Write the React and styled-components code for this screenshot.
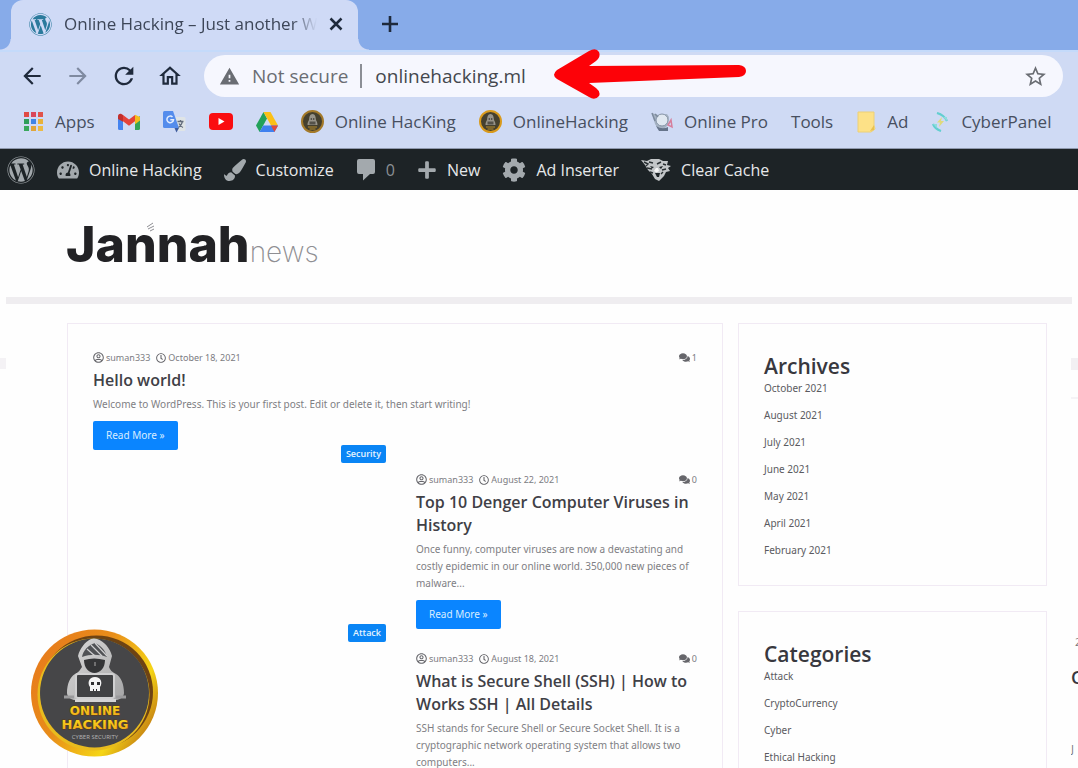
import React from 'react';
import styled, { createGlobalStyle, css } from 'styled-components';
import {
  FaWordpress,
  FaTachometerAlt,
  FaPaintBrush,
  FaPlus,
  FaCog,
  FaComments,
  FaRegUserCircle,
  FaRegClock,
} from 'react-icons/fa';
import { MdArrowBack, MdArrowForward, MdRefresh, MdOutlineHome, MdWarning, MdStarBorder } from 'react-icons/md';

const GlobalStyle = createGlobalStyle`
  * {
    box-sizing: border-box;
  }

  body {
    margin: 0;
    overflow: hidden;
    background: #fefefe;
    font-family: 'Open Sans', 'Noto Sans', sans-serif;
  }

  a {
    color: inherit;
    text-decoration: none;
  }

  button {
    display: inline-flex;
    align-items: center;
    justify-content: center;
    padding: 0;
    border: 0;
    background: none;
    color: inherit;
    font: inherit;
  }

  svg {
    display: block;
    flex-shrink: 0;
  }
`;

const Shell = styled.div`
  position: relative;
  display: flex;
  flex-direction: column;
  height: 100vh;
  overflow: hidden;

  > * {
    flex-shrink: 0;
  }
`;

/* ---------- browser ---------- */

const TabStrip = styled.div`
  display: flex;
  align-items: stretch;
  height: 50px;
  padding-left: 11px;
  background: #87abe9;
  color: #1f2a3c;
`;

const Tab = styled.div`
  position: relative;
  display: flex;
  align-items: center;
  gap: 12px;
  width: 347px;
  padding: 0 15px 2px 18px;
  border-radius: 12px 12px 0 0;
  background: #cfdaf6;

  &:before,
  &:after {
    content: '';
    position: absolute;
    bottom: 0;
    width: 11px;
    height: 11px;
  }

  &:before {
    right: 100%;
    background: radial-gradient(circle at 0 0, #87abe9 10px, #cfdaf6 11px);
  }

  &:after {
    left: 100%;
    background: radial-gradient(circle at 100% 0, #87abe9 10px, #cfdaf6 11px);
  }
`;

const TabTitle = styled.span`
  flex: 1;
  overflow: hidden;
  color: #3d4658;
  font-size: 17px;
  line-height: 24px;
  white-space: nowrap;
  mask-image: linear-gradient(to right, #000 90%, transparent 100%);
`;

const NewTab = styled.button`
  width: 40px;
  margin: 0 0 2px 12px;
`;

const Toolbar = styled.div`
  display: flex;
  align-items: center;
  gap: 22px;
  padding: 3px 15px 0 20px;
  border-top: 2px solid #c4dafa;
  background: #cfdaf4;
  color: #1f2a3c;
`;

const NavButton = styled.button`
  width: 24px;
  height: 24px;
  opacity: ${({ $muted }) => ($muted ? 0.45 : 1)};
`;

const Omnibox = styled.form`
  position: relative;
  display: flex;
  flex: 1;
  align-items: center;
  height: 42px;
  padding: 0 15px;
  border-radius: 21px;
  background: #f6f7fe;
  font-size: 19px;
  color: #6a6d73;
`;

const Security = styled.button`
  gap: 12px;
  padding-right: 12px;
`;

const Address = styled.input`
  flex: 1;
  min-width: 0;
  height: 24px;
  padding: 0 0 0 13px;
  border: 0;
  border-left: 2px solid #8b8e95;
  outline: 0;
  background: none;
  color: #44474d;
  font: inherit;
`;

const Pointer = styled.svg`
  position: absolute;
  top: -7px;
  left: 349px;
`;

const Bookmarks = styled.nav`
  display: flex;
  align-items: center;
  gap: 23px;
  height: 52px;
  padding: 0 18px 2px 23px;
  overflow: hidden;
  border-bottom: 1px solid #8f99ae;
  background: #cfdaf4;
  color: #474f60;
  font-size: 17px;
  line-height: 24px;
`;

const Bookmark = styled.a`
  display: flex;
  align-items: center;
  gap: 11px;
  white-space: nowrap;
`;

/* ---------- admin bar ---------- */

const AdminBar = styled.nav`
  display: flex;
  align-items: center;
  gap: 22px;
  height: 41px;
  padding: 0 7px;
  background: #1d2326;
  color: #e6e8ea;
  font-size: 16px;
`;

const AdminItem = styled.a`
  display: flex;
  align-items: center;
  gap: 10px;
  white-space: nowrap;
  ${({ $dim }) =>
    $dim &&
    css`
      color: #8b9094;
    `}

  svg {
    color: #a3a9ad;
  }
`;

/* ---------- site ---------- */

const SiteHeader = styled.header`
  height: 107px;
  padding: 23px 66px 0;
`;

const Brand = styled.a`
  position: relative;
  display: inline-flex;
  align-items: baseline;
  color: #222225;
  font-family: Inter, sans-serif;
  font-size: 50px;
  font-weight: 800;
  line-height: 62px;
`;

const BrandThin = styled.span`
  color: #8f8f93;
  font-size: 28px;
  font-weight: 200;
`;

const BrandMark = styled.svg`
  position: absolute;
  top: 9px;
  left: 80px;
`;

const HeaderShade = styled.div`
  height: 7px;
  margin: 0 6px;
  background: #efedf0;
`;

const Columns = styled.div`
  display: grid;
  grid-template-columns: minmax(0, 656fr) minmax(0, 318fr) 7px;
  gap: 15px;
  align-items: start;
  padding: 19px 0 0 67px;
`;

const panel = css`
  border: 1px solid #f1eaf4;
  background: #fefefe;
`;

const Posts = styled.main`
  ${panel};
  display: flex;
  flex-direction: column;
  gap: 21px;
  padding: 25px;
`;

const Post = styled.article`
  display: grid;
  grid-template-columns: ${({ $thumb }) => ($thumb ? '293px minmax(0, 1fr)' : 'minmax(0, 1fr)')};
  column-gap: 30px;
`;

const Thumb = styled.div`
  position: relative;
`;

const Badge = styled.a`
  position: absolute;
  top: -26px;
  right: 0;
  padding: 0 5px;
  border-radius: 2px;
  background: #0a85f5;
  color: #e6f4ff;
  font-size: 9px;
  font-weight: 600;
  line-height: 18px;
`;

const Meta = styled.div`
  display: flex;
  align-items: center;
  gap: 6px;
  margin-bottom: 3px;
  color: #7c7c82;
  font-family: 'Noto Sans', sans-serif;
  font-size: 9px;
  line-height: 17px;
`;

const MetaItem = styled.span`
  display: flex;
  align-items: center;
  gap: 2px;

  svg {
    color: #66666b;
  }

  &:last-child {
    margin-left: auto;
  }
`;

const PostTitle = styled.h2`
  margin: 0 0 4px;
  color: #404046;
  font-size: 16px;
  font-weight: 600;
  line-height: 23px;
`;

const Excerpt = styled.p`
  margin: 0 0 8px;
  color: #7e7e84;
  font-family: 'Noto Sans', sans-serif;
  font-size: 10px;
  line-height: 17px;
`;

const ReadMore = styled.a`
  display: inline-block;
  padding: 0 13px;
  border-radius: 2px;
  background: #0a85ff;
  color: #d8edff;
  font-family: 'Noto Sans', sans-serif;
  font-size: 10px;
  line-height: 29px;
`;

const Sidebar = styled.aside`
  display: flex;
  flex-direction: column;
  gap: 25px;
  margin-right: 9px;
`;

const Widget = styled.section`
  ${panel};
  padding: 29px 25px 26px;
`;

const WidgetTitle = styled.h3`
  margin: 0;
  color: #38383e;
  font-size: 21px;
  font-weight: 600;
  line-height: 27px;
`;

const WidgetList = styled.ul`
  display: flex;
  flex-direction: column;
  gap: 10px;
  margin: 0;
  padding: 0;
  color: #5a5a60;
  font-family: 'Noto Sans', sans-serif;
  font-size: 10px;
  line-height: 17px;
  list-style: none;
`;

const NextColumn = styled.div`
  overflow: hidden;
  color: #38383e;
`;

const NextShade = styled.div`
  height: 12px;
  margin-top: 35px;
  background: #f2f0f3;
`;

const NextBody = styled.div`
  margin-top: 27px;
  padding-top: 234px;
  border-top: 2px solid #f5f3f6;
`;

const NextText = styled.div`
  padding-left: ${({ $indent }) => ($indent ? 4 : 0)}px;
  color: #77777c;
  font-size: 11px;
  line-height: 17px;
`;

const NextTitle = styled.div`
  margin: 14px 0 50px;
  font-size: 18px;
  font-weight: 600;
  line-height: 26px;
`;

const EdgeShade = styled.div`
  position: absolute;
  top: 358px;
  left: 0;
  width: 6px;
  height: 11px;
  background: #f4f2f5;
`;

const Seal = styled.svg`
  position: absolute;
  bottom: 10px;
  left: 30px;
`;

/* ---------- drawings ---------- */

const CloseIcon = () => (
  <svg width="14" height="14" viewBox="0 0 14 14" fill="none" stroke="currentColor" strokeWidth="2.500">
    <path d="M1.500 1.500l11 11M12.500 1.500l-11 11" />
  </svg>
);

const PlusIcon = () => (
  <svg width="18" height="18" viewBox="0 0 18 18" fill="none" stroke="currentColor" strokeWidth="2.600">
    <path d="M9 1v16M1 9h16" />
  </svg>
);

const AppsIcon = () => {
  const colors = ['#e04a44', '#d9475a', '#e0534a', '#2f9e5b', '#3f84e5', '#e8b23a', '#3aa85c', '#e0a53a', '#ecbb45'];
  return (
    <svg width="21" height="21" viewBox="0 0 21 21">
      {colors.map((c, i) => (
        <rect key={i} x={1 + (i % 3) * 7} y={1 + Math.floor(i / 3) * 7} width="5" height="5" fill={c} />
      ))}
    </svg>
  );
};

const GmailIcon = () => (
  <svg width="22" height="18" viewBox="0 0 22 18">
    <path d="M0 3v12.500q0 1.500 1.500 1.500H5V7z" fill="#4483ef" />
    <path d="M22 3v12.500q0 1.500-1.500 1.500H17V7z" fill="#35a456" />
    <path d="M17 1.800L22 4v3.500l-5 3.700z" fill="#f4bc1c" />
    <path d="M5 2l6 4.600L17 2v6.200l-6 4.600-6-4.600z" fill="#e5433a" />
    <path d="M0 3.500Q0 .5 3 .8L5 2v6.800L0 6z" fill="#c32f2c" />
  </svg>
);

const TranslateIcon = () => (
  <svg width="23" height="22" viewBox="0 0 23 22">
    <path d="M10 6h11q1.500 0 1.500 1.500v11q0 1.500-1.500 1.500h-7z" fill="#dfe4e6" />
    <path d="M11.500 17H16l-2.500 4.500z" fill="#3f5c9e" />
    <path d="M1.500 0H10l6 17H1.500Q0 17 0 15.500v-14Q0 0 1.500 0z" fill="#548cec" />
    <path d="M9.500 6A3.300 3.300 0 1 0 10.500 8.800H7.300" fill="none" stroke="#e3edff" strokeWidth="1.500" />
    <path d="M14.500 10.500h6M17.500 9v1.500M19.500 10.500q-1 4-4 6M16 12.500q1.500 3 4 4" fill="none" stroke="#646d7c" strokeWidth="1.300" />
  </svg>
);

const YoutubeIcon = () => (
  <svg width="24" height="17" viewBox="0 0 24 17">
    <rect width="24" height="17" rx="4" fill="#fa0d10" />
    <path d="M9.500 5v7l6-3.500z" fill="#fff" />
  </svg>
);

const DriveIcon = () => (
  <svg width="22" height="20" viewBox="0 0 22 20">
    <path d="M7.500 0L0 13.500 3.600 20 11 6.500z" fill="#22a15a" />
    <path d="M7.500 0h7L22 13.500h-7z" fill="#fbc016" />
    <path d="M3.600 20l3.600-6.500H22L18.400 20z" fill="#3f80ef" />
    <path d="M15 13.500h7L18.400 20z" fill="#e2493b" />
  </svg>
);

const HackerIcon = ({ bright }) => (
  <svg width="23" height="23" viewBox="0 0 23 23">
    <circle cx="11.500" cy="11.500" r="10.500" fill="#45402f" stroke={bright ? '#d99a1c' : '#a47a2a'} strokeWidth="2" />
    <path d="M11.500 4c2.500 0 3.300 3 3.300 5 0 1.500 1.700 2.500 1.700 6h-10c0-3.500 1.700-4.500 1.700-6 0-2 .8-5 3.300-5z" fill="#98948a" />
    <circle cx="10.300" cy="9" r="0.800" fill="#2c2a24" />
    <circle cx="12.700" cy="9" r="0.800" fill="#2c2a24" />
    <rect x="8.500" y="11.500" width="6" height="3" fill="#55524a" />
    <path d="M7 17h9M8.500 19h6" stroke="#b88c2c" strokeWidth="1.200" />
  </svg>
);

const GlobeIcon = () => (
  <svg width="22" height="20" viewBox="0 0 22 20">
    <path d="M1 1l6 2 9-1 2 3-1 8-4 4H7l-3-5z" fill="#a5b2c2" />
    <circle cx="11" cy="8" r="6" fill="#e0e8f1" stroke="#8694a7" />
    <path d="M1 1l3 8M4 2l3 3" stroke="#7d8b9e" strokeWidth="1.500" />
    <path d="M5 14q6 4 12 1v4H8z" fill="#66748a" />
    <path d="M17 13l3-5 1 7z" fill="none" stroke="#d67f9c" strokeWidth="1.500" />
  </svg>
);

const NoteIcon = () => (
  <svg width="20" height="22" viewBox="0 0 20 22">
    <path d="M2 1h16v13l1 4-4 3H2z" fill="#fde187" stroke="#edd077" />
    <path d="M14 20l4-6v5z" fill="#e8c24f" />
  </svg>
);

const CyberPanelIcon = () => (
  <svg width="19" height="20" viewBox="0 0 19 20">
    <path d="M6 1q7 2 10 8M2 12q2 5 8 7" fill="none" stroke="#62cfd0" strokeWidth="2.200" />
    <path d="M12 5h4V9zM2 12h4v4z" fill="#8fdcdc" />
    <path d="M11 5l-5 5.500h3L8 15l5-6h-3z" fill="#dfda7c" />
  </svg>
);

const SpeechIcon = () => (
  <svg width="20" height="23" viewBox="0 0 20 23" fill="currentColor">
    <path d="M3 1h14q2 0 2 2v11q0 2-2 2h-3l-7 6.500V16H3q-2 0-2-2V3q0-2 2-2z" />
  </svg>
);

const TigerIcon = () => (
  <svg width="30" height="24" viewBox="0 0 30 24">
    <path d="M0 2l6 1 4-2h8l4 2h5l-1 4 4 1-3 2 2 3-4 1-2 4-5 5-4-2-3-5-4-4-3-5z" fill="#c3c6c8" />
    <path
      d="M3 4l4 2-2 2M8 4l4 1M20 4l-4 2M6 10l5 1M22 6l3 1M25 11l-4 1M9 14l3 1M20 16l2-2"
      fill="none"
      stroke="#2a3033"
      strokeWidth="1.400"
    />
    <path d="M9 8l4 1-2 1.500zM18 9l4-1-2 3zM14 15h5l-1 4h-2z" fill="#1d2326" />
    <path d="M13 13l2-3h2l1 3-2.500 1.500z" fill="#f5f5f5" />
  </svg>
);

const HackerSeal = () => (
  <Seal width="129" height="129" viewBox="0 0 129 129" role="img" aria-label="Online Hacking">
    <defs>
      <linearGradient id="ring" x1="0" y1="0.2" x2="1" y2="0.8">
        <stop offset="0" stopColor="#e77a1c" />
        <stop offset="0.4" stopColor="#e88d1a" />
        <stop offset="0.75" stopColor="#f5d516" />
        <stop offset="1" stopColor="#b96c12" />
      </linearGradient>
      <linearGradient id="gold" x1="0" y1="0" x2="0" y2="1">
        <stop offset="0" stopColor="#fbe21c" />
        <stop offset="1" stopColor="#eda21a" />
      </linearGradient>
      <linearGradient id="steel" x1="0" y1="0" x2="1" y2="1">
        <stop offset="0" stopColor="#dadada" />
        <stop offset="1" stopColor="#a5a5a6" />
      </linearGradient>
    </defs>
    <circle cx="64.500" cy="64" r="63.500" fill="url(#ring)" />
    <circle cx="66.500" cy="63" r="56.500" fill="#6e4313" />
    <circle cx="63.500" cy="65.500" r="56" fill="#e8bb1e" />
    <circle cx="64.500" cy="64" r="54.500" fill="#464648" />
    <path
      d="M61 10c-6 3-11 9-13 17l4 11c-2 3-3 5-7 7-5 3-8 10-8 19 0 3 3 6 7 7h43c4-1 7-4 7-7 0-9-3-16-8-19-4-2-6-4-7-7l3-11c-2-8-8-15-15-17q-3-1-6 0z"
      fill="url(#steel)"
    />
    <path d="M65 14c7 3 11 9 12 14-8-3-17-3-25 0 1-6 6-12 13-14z" fill="#505255" />
    <path d="M65 14l12 13M61 16l11 11M57 20l8 7" stroke="#cfcfd0" strokeWidth="1.200" />
    <path d="M54 31q10-3 21 0c0 8-5 13-10.500 13S54 39 54 31z" fill="#343537" />
    <path d="M65 33v4" stroke="#aaa" />
    <rect x="46" y="45" width="38" height="24" rx="2" fill="#414244" stroke="#d0d0d1" strokeWidth="2" />
    <path d="M65 48c-6 0-8 6-5 10v4h10v-4c3-4 1-10-5-10z" fill="#f4f4f4" />
    <path d="M61 53h3v3h-3zM67 53h3v3h-3zM63 60h1v2h-1zM66 60h1v2h-1z" fill="#2e2e30" />
    <path d="M34 68h10M86 68h10" stroke="#9b9b9d" strokeWidth="3" />
    <path d="M45 70h41v3H45z" fill="#d4d4d5" />
    <g
      fontFamily="DejaVu Sans, sans-serif"
      fontWeight="700"
      textAnchor="middle"
      fill="url(#gold)"
      stroke="#5f3a12"
      strokeWidth="1"
      paintOrder="stroke"
    >
      <text x="65" y="86" fontSize="12">ONLINE</text>
      <text x="65" y="100" fontSize="13">HACKING</text>
    </g>
    <text x="65" y="110" fontFamily="Open Sans, sans-serif" fontSize="6" textAnchor="middle" fill="#b5b5b6">
      CYBER SECURITY
    </text>
  </Seal>
);

/* ---------- data ---------- */

const bookmarks = [
  { icon: <AppsIcon />, label: 'Apps' },
  { icon: <GmailIcon /> },
  { icon: <TranslateIcon /> },
  { icon: <YoutubeIcon /> },
  { icon: <DriveIcon /> },
  { icon: <HackerIcon />, label: 'Online HacKing' },
  { icon: <HackerIcon bright />, label: 'OnlineHacking' },
  { icon: <GlobeIcon />, label: 'Online Pro' },
  { label: 'Tools' },
  { icon: <NoteIcon />, label: 'Ad' },
  { icon: <CyberPanelIcon />, label: 'CyberPanel' },
];

const adminItems = [
  { icon: <FaWordpress size={28} /> },
  { icon: <FaTachometerAlt size={22} />, label: 'Online Hacking' },
  { icon: <FaPaintBrush size={22} />, label: 'Customize' },
  { icon: <SpeechIcon />, label: '0', dim: true },
  { icon: <FaPlus size={20} />, label: 'New' },
  { icon: <FaCog size={24} />, label: 'Ad Inserter' },
  { icon: <TigerIcon />, label: 'Clear Cache' },
];

const posts = [
  {
    date: 'October 18, 2021',
    comments: 1,
    title: 'Hello world!',
    excerpt: 'Welcome to WordPress. This is your first post. Edit or delete it, then start writing!',
  },
  {
    category: 'Security',
    date: 'August 22, 2021',
    comments: 0,
    title: 'Top 10 Denger Computer Viruses in History',
    excerpt:
      'Once funny, computer viruses are now a devastating and costly epidemic in our online world. 350,000 new pieces of malware...',
  },
  {
    category: 'Attack',
    date: 'August 18, 2021',
    comments: 0,
    title: 'What is Secure Shell (SSH) | How to Works SSH | All Details',
    excerpt:
      'SSH stands for Secure Shell or Secure Socket Shell. It is a cryptographic network operating system that allows two computers...',
  },
];

const widgets = [
  {
    title: 'Archives',
    items: ['October 2021', 'August 2021', 'July 2021', 'June 2021', 'May 2021', 'April 2021', 'February 2021'],
  },
  { title: 'Categories', items: ['Attack', 'CryptoCurrency', 'Cyber', 'Ethical Hacking'] },
];

const Browser = () => (
  <>
    <TabStrip>
      <Tab>
        <FaWordpress size={23} color="#2b7a9c" />
        <TabTitle>Online Hacking – Just another WordPress site</TabTitle>
        <button type="button" aria-label="Close tab">
          <CloseIcon />
        </button>
      </Tab>
      <NewTab type="button" aria-label="New tab">
        <PlusIcon />
      </NewTab>
    </TabStrip>

    <Toolbar>
      <NavButton type="button" aria-label="Back">
        <MdArrowBack size={26} />
      </NavButton>
      <NavButton type="button" aria-label="Forward" $muted>
        <MdArrowForward size={26} />
      </NavButton>
      <NavButton type="button" aria-label="Reload">
        <MdRefresh size={28} />
      </NavButton>
      <NavButton type="button" aria-label="Home">
        <MdOutlineHome size={26} />
      </NavButton>
      <Omnibox>
        <Security type="button">
          <MdWarning size={21} />
          Not secure
        </Security>
        <Address type="text" aria-label="Address" defaultValue="onlinehacking.ml" />
        <button type="button" aria-label="Bookmark this page">
          <MdStarBorder size={25} />
        </button>
        <Pointer width="196" height="52" viewBox="0 0 196 52">
          <path
            d="M4 22L36 3Q43 -1 46 4Q48 9 43 13L36 18L186 17Q193 18 193 23Q193 28 186 29L36 35L43 40Q48 44 46 48Q42 53 36 49L4 31Q-2 27 4 22z"
            fill="#fd0208"
          />
        </Pointer>
      </Omnibox>
    </Toolbar>

    <Bookmarks>
      {bookmarks.map(({ icon, label }, i) => (
        <Bookmark href="#" key={i}>
          {icon}
          {label}
        </Bookmark>
      ))}
    </Bookmarks>
  </>
);

const PostCard = ({ post }) => (
  <Post $thumb={!!post.category}>
    {post.category && (
      <Thumb>
        <Badge href="#">{post.category}</Badge>
      </Thumb>
    )}
    <div>
      <Meta>
        <MetaItem>
          <FaRegUserCircle size={11} />
          suman333
        </MetaItem>
        <MetaItem>
          <FaRegClock size={10} />
          {post.date}
        </MetaItem>
        <MetaItem>
          <FaComments size={11} />
          {post.comments}
        </MetaItem>
      </Meta>
      <PostTitle>
        <a href="#">{post.title}</a>
      </PostTitle>
      <Excerpt>{post.excerpt}</Excerpt>
      <ReadMore href="#">Read More »</ReadMore>
    </div>
  </Post>
);

const App = () => (
  <Shell>
    <GlobalStyle />
    <Browser />

    <AdminBar>
      {adminItems.map(({ icon, label, dim }, i) => (
        <AdminItem href="#" key={i} $dim={dim}>
          {icon}
          {label}
        </AdminItem>
      ))}
    </AdminBar>

    <SiteHeader>
      <Brand href="#">
        Jannah
        <BrandThin>news</BrandThin>
        <BrandMark width="10" height="10" viewBox="0 0 10 10">
          <path d="M1 5l6-4M2 7l6-3M4 9l4-2" stroke="#8d8d92" strokeWidth="1" />
        </BrandMark>
      </Brand>
    </SiteHeader>
    <HeaderShade />

    <Columns>
      <Posts>
        {posts.map(post => (
          <PostCard key={post.title} post={post} />
        ))}
      </Posts>

      <Sidebar>
        {widgets.map(({ title, items }) => (
          <Widget key={title}>
            <WidgetTitle>{title}</WidgetTitle>
            <WidgetList>
              {items.map(item => (
                <li key={item}>
                  <a href="#">{item}</a>
                </li>
              ))}
            </WidgetList>
          </Widget>
        ))}
      </Sidebar>

      <NextColumn>
        <NextShade />
        <NextBody>
          <NextText $indent>2</NextText>
          <NextTitle>C</NextTitle>
          <NextText>J</NextText>
        </NextBody>
      </NextColumn>
    </Columns>

    <EdgeShade />
    <HackerSeal />
  </Shell>
);

export default App;
